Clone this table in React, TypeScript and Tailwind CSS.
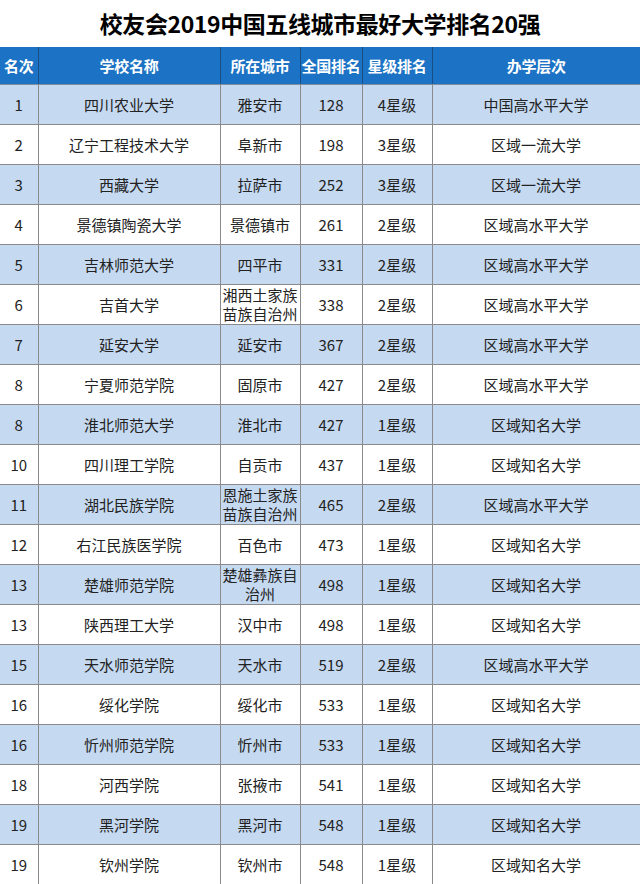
import React from "react";

type Row = {
    rank: string;
    school: string;
    city: string[];
    national: string;
    star: string;
    level: string;
};

const rows: Row[] = [
    { rank: "1", school: "四川农业大学", city: ["雅安市"], national: "128", star: "4星级", level: "中国高水平大学" },
    { rank: "2", school: "辽宁工程技术大学", city: ["阜新市"], national: "198", star: "3星级", level: "区域一流大学" },
    { rank: "3", school: "西藏大学", city: ["拉萨市"], national: "252", star: "3星级", level: "区域一流大学" },
    { rank: "4", school: "景德镇陶瓷大学", city: ["景德镇市"], national: "261", star: "2星级", level: "区域高水平大学" },
    { rank: "5", school: "吉林师范大学", city: ["四平市"], national: "331", star: "2星级", level: "区域高水平大学" },
    { rank: "6", school: "吉首大学", city: ["湘西土家族", "苗族自治州"], national: "338", star: "2星级", level: "区域高水平大学" },
    { rank: "7", school: "延安大学", city: ["延安市"], national: "367", star: "2星级", level: "区域高水平大学" },
    { rank: "8", school: "宁夏师范学院", city: ["固原市"], national: "427", star: "2星级", level: "区域高水平大学" },
    { rank: "8", school: "淮北师范大学", city: ["淮北市"], national: "427", star: "1星级", level: "区域知名大学" },
    { rank: "10", school: "四川理工学院", city: ["自贡市"], national: "437", star: "1星级", level: "区域知名大学" },
    { rank: "11", school: "湖北民族学院", city: ["恩施土家族", "苗族自治州"], national: "465", star: "2星级", level: "区域高水平大学" },
    { rank: "12", school: "右江民族医学院", city: ["百色市"], national: "473", star: "1星级", level: "区域知名大学" },
    { rank: "13", school: "楚雄师范学院", city: ["楚雄彝族自", "治州"], national: "498", star: "1星级", level: "区域知名大学" },
    { rank: "13", school: "陕西理工大学", city: ["汉中市"], national: "498", star: "1星级", level: "区域知名大学" },
    { rank: "15", school: "天水师范学院", city: ["天水市"], national: "519", star: "2星级", level: "区域高水平大学" },
    { rank: "16", school: "绥化学院", city: ["绥化市"], national: "533", star: "1星级", level: "区域知名大学" },
    { rank: "16", school: "忻州师范学院", city: ["忻州市"], national: "533", star: "1星级", level: "区域知名大学" },
    { rank: "18", school: "河西学院", city: ["张掖市"], national: "541", star: "1星级", level: "区域知名大学" },
    { rank: "19", school: "黑河学院", city: ["黑河市"], national: "548", star: "1星级", level: "区域知名大学" },
    { rank: "19", school: "钦州学院", city: ["钦州市"], national: "548", star: "1星级", level: "区域知名大学" },
];

const headers = ["名次", "学校名称", "所在城市", "全国排名", "星级排名", "办学层次"];

const cell = "p-0 text-center text-[15px] text-[#222] leading-none border-r border-b border-[#8a8a8a]";

const App: React.FC = () => {
    return (
        <div className="w-[640px] h-[884px] bg-white font-['Noto_Sans_CJK_SC',sans-serif] overflow-hidden">
            {/* Title */}
            <div className="h-[47px] flex items-center justify-center">
                <h1 className="text-[23px] font-bold text-black leading-none tracking-[-0.4px]">
                    校友会2019中国五线城市最好大学排名20强
                </h1>
            </div>

            {/* Table */}
            <table className="w-[640px] table-fixed border-collapse">
                <colgroup>
                    <col className="w-[38px]" />
                    <col className="w-[182px]" />
                    <col className="w-[80px]" />
                    <col className="w-[62px]" />
                    <col className="w-[70px]" />
                    <col className="w-[208px]" />
                </colgroup>
                <thead>
                    <tr className="h-[37px] bg-[#1c72c4]">
                        {headers.map((h, i) => (
                            <th
                                key={h}
                                className={`p-0 text-[15px] font-bold text-white leading-none whitespace-nowrap tracking-[-0.3px] border-b border-[#7f8c99] ${
                                    i < headers.length - 1 ? "border-r border-r-[#1a4f86]" : ""
                                }`}
                            >
                                {h}
                            </th>
                        ))}
                    </tr>
                </thead>
                <tbody>
                    {rows.map((r, idx) => (
                        <tr
                            key={idx}
                            className={`h-[40px] ${idx % 2 === 0 ? "bg-[#c5d9f1]" : "bg-white"}`}
                        >
                            <td className={cell}>{r.rank}</td>
                            <td className={cell}>{r.school}</td>
                            <td className="p-0 text-center text-[15px] text-[#222] leading-[19px] border-r border-b border-[#8a8a8a]">
                                {r.city.map((c) => (
                                    <div key={c}>{c}</div>
                                ))}
                            </td>
                            <td className={cell}>{r.national}</td>
                            <td className={cell}>{r.star}</td>
                            <td className={cell}>{r.level}</td>
                        </tr>
                    ))}
                </tbody>
            </table>
        </div>
    );
};

export default App;
